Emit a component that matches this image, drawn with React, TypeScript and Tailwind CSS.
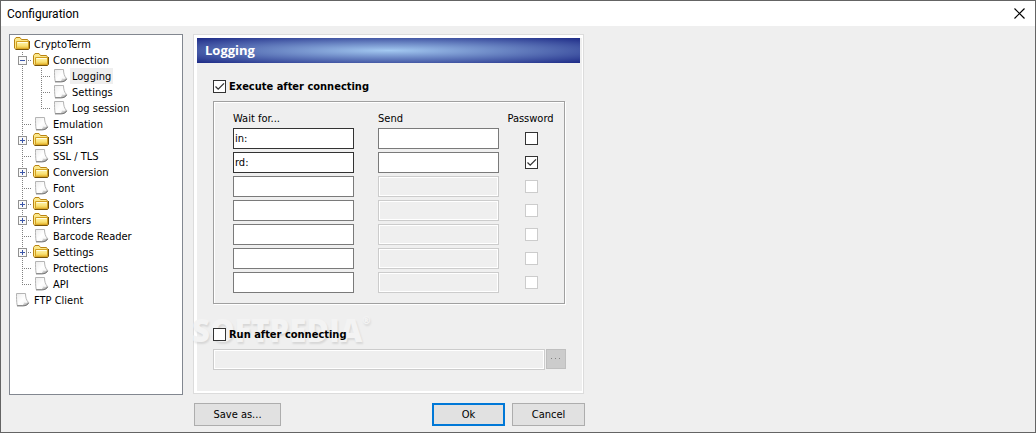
import { useState } from "react";
import type { ReactNode } from "react";

type TreeItem = { label: string; children?: TreeItem[]; folder?: boolean };

const connectionPages: TreeItem[] = [
  { label: "Logging" },
  { label: "Settings" },
  { label: "Log session" },
];

const tree: TreeItem[] = [
  {
    label: "CryptoTerm",
    folder: true,
    children: [
      { label: "Connection", folder: true, children: connectionPages },
      { label: "Emulation" },
      { label: "SSH", folder: true },
      { label: "SSL / TLS" },
      { label: "Conversion", folder: true },
      { label: "Font" },
      { label: "Colors", folder: true },
      { label: "Printers", folder: true },
      { label: "Barcode Reader" },
      { label: "Settings", folder: true },
      { label: "Protections" },
      { label: "API" },
    ],
  },
  { label: "FTP Client" },
];

function FolderIcon() {
  return (
    <svg width="16" height="16" viewBox="0 0 16 16" className="shrink-0" aria-hidden="true">
      <defs>
        <linearGradient id="folderFront" x1="0" y1="0" x2="0" y2="1">
          <stop offset="0" stopColor="#fff6b4" />
          <stop offset="0.6" stopColor="#f9e070" />
          <stop offset="1" stopColor="#e0ab24" />
        </linearGradient>
      </defs>
      <path d="M0.5 12V3.5L2 1.5H6L7.5 3.5H13.5L14.5 5V12.5L13.5 13.5H2Z" fill="#fbe88a" stroke="#b98413" />
      <path d="M2.5 12.5V5.5H14.5V13H3Z" fill="url(#folderFront)" stroke="#d39f20" />
      <path d="M1.5 13.5H14.5L15.5 12.5V5" fill="none" stroke="#75530a" />
      <path d="M3.5 6.5H13.5" stroke="#fffde6" />
    </svg>
  );
}

function PageIcon() {
  return (
    <svg width="16" height="16" viewBox="0 0 16 16" className="shrink-0" aria-hidden="true">
      <defs>
        <linearGradient id="pageFill" x1="0" y1="0" x2="1" y2="1">
          <stop offset="0" stopColor="#ececec" />
          <stop offset="0.5" stopColor="#ffffff" />
          <stop offset="1" stopColor="#f2f2f2" />
        </linearGradient>
        <linearGradient id="pageCurl" x1="0" y1="0" x2="1" y2="1">
          <stop offset="0" stopColor="#f4f4f4" />
          <stop offset="0.55" stopColor="#bdbdbd" />
          <stop offset="1" stopColor="#5e5e5e" />
        </linearGradient>
      </defs>
      <path d="M2.5 1.5H11.5C11.5 5 12.2 8 14.5 10.5L8.5 13.5H3.2C2.5 10 2.5 5 2.5 1.5Z" fill="url(#pageFill)" stroke="#b4b4b4" />
      <path d="M8 14C9.6 13 10 11.8 9.8 10.2C11.5 11 13 11 14.8 10.2C14.8 12.6 12 14.2 8 14Z" fill="url(#pageCurl)" />
      <path d="M3 13.9H9C11.800 13.800 14 12.600 14.700 10.800" fill="none" stroke="#6c6c6c" strokeWidth="0.9" />
    </svg>
  );
}

function Guide({ kind, box }: { kind: "through" | "tee" | "end" | "blank"; box?: "plus" | "minus" }) {
  return (
    <svg width="19" height="16" viewBox="0 0 19 16" className="shrink-0" shapeRendering="crispEdges" aria-hidden="true">
      {kind !== "blank" && (
        <path d={kind === "end" ? "M8.5 0V9" : "M8.5 0V16"} stroke="#808080" strokeDasharray="1 1" />
      )}
      {(kind === "tee" || kind === "end") && <path d="M8 8.500H18" stroke="#808080" strokeDasharray="1 1" />}
      {box && (
        <>
          <rect x="4.500" y="4.500" width="8" height="8" fill="#fafafa" stroke="#919191" />
          <path d="M6 8.500H11" stroke="#3a55a8" />
          {box === "plus" && <path d="M8.500 6V11" stroke="#3a55a8" />}
        </>
      )}
    </svg>
  );
}

function Node({
  item,
  guides,
  last,
  selected,
  onSelect,
}: {
  item: TreeItem;
  guides: boolean[] | null;
  last: boolean;
  selected: TreeItem;
  onSelect: (item: TreeItem) => void;
}) {
  const [open, setOpen] = useState(true);
  const guideKind = last ? "end" : "tee";
  const box = item.folder ? (item.children && open ? "minus" : "plus") : undefined;
  return (
    <li>
      <div className="flex h-4 items-center">
        {guides?.map((more, i) => <Guide key={i} kind={more ? "through" : "blank"} />)}
        {guides &&
          (box ? (
            <button type="button" aria-label={"Toggle " + item.label} onClick={() => setOpen(!open)}>
              <Guide kind={guideKind} box={box} />
            </button>
          ) : (
            <Guide kind={guideKind} />
          ))}
        {item.folder ? <FolderIcon /> : <PageIcon />}
        <button
          type="button"
          onClick={() => onSelect(item)}
          className={
            item === selected
              ? "ml-0.5 flex h-4 bg-[#efefef] px-0.5 leading-[18px] whitespace-nowrap"
              : "ml-0.5 flex h-4 px-0.5 leading-[18px] whitespace-nowrap"
          }
        >
          {item.label}
        </button>
      </div>
      {item.children && open && (
        <ul>
          {item.children.map((child, i) => (
            <Node
              key={child.label}
              item={child}
              guides={guides ? [...guides, !last] : []}
              last={i === item.children!.length - 1}
              selected={selected}
              onSelect={onSelect}
            />
          ))}
        </ul>
      )}
    </li>
  );
}

function CheckBox({
  name,
  initial = false,
  disabled = false,
  children,
}: {
  name?: string;
  initial?: boolean;
  disabled?: boolean;
  children?: ReactNode;
}) {
  return (
    <label className="flex items-center gap-[3px] leading-[15px] font-bold">
      <span className="grid size-[13px] shrink-0">
        <input
          type="checkbox"
          aria-label={name}
          defaultChecked={initial}
          disabled={disabled}
          className="peer col-start-1 row-start-1 size-[13px] appearance-none border border-[#333] bg-white disabled:border-[#ccc]"
        />
        <svg
          width="13"
          height="13"
          viewBox="0 0 13 13"
          className="pointer-events-none invisible col-start-1 row-start-1 peer-checked:visible"
          aria-hidden="true"
        >
          <path d="M2.500 6.500L5.200 9.200L11 3.400" fill="none" stroke="#333" strokeWidth="1.300" />
        </svg>
      </span>
      {children}
    </label>
  );
}

const rows = [
  { wait: "in:", password: false, enabled: true },
  { wait: "rd:", password: true, enabled: true },
  { wait: "", password: false, enabled: false },
  { wait: "", password: false, enabled: false },
  { wait: "", password: false, enabled: false },
  { wait: "", password: false, enabled: false },
  { wait: "", password: false, enabled: false },
];

const disabledField =
  "h-[21px] w-full min-w-0 border border-[#ccc] bg-[#efefef] px-px outline-1 -outline-offset-2 outline-white";

export default function App() {
  const [selected, setSelected] = useState<TreeItem>(connectionPages[0]);
  return (
    <div className="flex min-h-screen flex-col border border-[#646464] bg-[#efefef] font-['DejaVu_Sans_Condensed','DejaVu_Sans',sans-serif] text-[11px] leading-4 text-black">
      <header className="flex h-[25px] items-center justify-between bg-white pr-[10px] pl-[6px]">
        <h1 className="font-[Roboto,sans-serif] text-[12px]">Configuration</h1>
        <button type="button" aria-label="Close">
          <svg width="11" height="11" viewBox="0 0 11 11" aria-hidden="true">
            <path d="M0.500 0.500L10.500 10.500M10.500 0.500L0.500 10.500" stroke="#000" strokeWidth="1.200" />
          </svg>
        </button>
      </header>

      <div className="flex flex-1 items-start gap-[10px] px-2 pt-2 pb-[6px]">
        <nav className="mb-[31px] w-[174px] shrink-0 self-stretch border border-[#828790] bg-white py-px pl-1">
          <ul>
            {tree.map((item) => (
              <Node key={item.label} item={item} guides={null} last={false} selected={selected} onSelect={setSelected} />
            ))}
          </ul>
        </nav>

        <main className="flex w-full max-w-[392px] flex-col gap-[9px]">
          <section className="relative mr-px border border-[#dcdcdc] bg-white pt-[3px] pr-px pb-0.5 pl-[3px]">
            <div className="bg-[#efefef] pb-[21px]">
              <h2 className="mr-0.5 h-[25px] bg-[radial-gradient(ellipse_at_center,#a3c9f1_0%,#1d2a86_100%)] pl-2 font-['Open_Sans',sans-serif] text-[13px] leading-[25px] font-bold text-white">
                Logging
              </h2>
              <div
                aria-hidden="true"
                className="pointer-events-none absolute bottom-[47px] -left-0.5 flex items-start font-['Open_Sans',sans-serif] text-[31px] leading-[32px] font-extrabold text-[#f3f3f3] [text-shadow:1px_2px_2px_rgba(0,0,0,0.1)]"
              >
                SOFTPEDIA<span className="text-[10px] leading-[12px]">®</span>
              </div>
              <div className="relative pt-4 pr-4 pl-4">
                <CheckBox initial>Execute after connecting</CheckBox>
                <div className="mt-[7px] mr-px border border-[#a0a0a0] pt-[9px] pb-[7px] pl-[19px] shadow-[1px_1px_0_#fff,inset_1px_1px_0_#fff]">
                  <table className="w-full table-fixed border-collapse">
                    <colgroup>
                      <col className="w-[145px]" />
                      <col className="w-[121px]" />
                      <col />
                    </colgroup>
                    <thead>
                      <tr className="h-[17px] text-left align-top">
                        <th className="p-0 font-normal">Wait for...</th>
                        <th className="p-0 font-normal">Send</th>
                        <th className="p-0 pr-0.5 text-center font-normal">Password</th>
                      </tr>
                    </thead>
                    <tbody>
                      {rows.map((row, i) => (
                        <tr key={i} className="h-6 align-top">
                          <td className="p-0 pr-6">
                            <input
                              type="text"
                              aria-label={"Wait for, row " + (i + 1)}
                              defaultValue={row.wait}
                              className={
                                row.wait
                                  ? "block h-[21px] w-full border border-[#333] bg-white px-px"
                                  : "block h-[21px] w-full border border-[#7a7a7a] bg-white px-px"
                              }
                            />
                          </td>
                          <td className="p-0">
                            <input
                              type="text"
                              aria-label={"Send, row " + (i + 1)}
                              disabled={!row.enabled}
                              className={
                                row.enabled
                                  ? "block h-[21px] w-full border border-[#7a7a7a] bg-white px-px"
                                  : "block " + disabledField
                              }
                            />
                          </td>
                          <td className="p-0 pt-1 pr-px">
                            <div className="flex justify-center">
                              <CheckBox name={"Password, row " + (i + 1)} initial={row.password} disabled={!row.enabled} />
                            </div>
                          </td>
                        </tr>
                      ))}
                    </tbody>
                  </table>
                </div>
                <div className="mt-[23px]">
                  <CheckBox>Run after connecting</CheckBox>
                </div>
                <div className="mt-[7px] flex gap-px">
                  <input type="text" disabled aria-label="Program to run" className={disabledField} />
                  <button
                    type="button"
                    disabled
                    aria-label="Browse"
                    className="flex h-5 w-5 shrink-0 items-center justify-center border border-[#bfbfbf] bg-[#ccc]"
                  >
                    <svg width="10" height="2" viewBox="0 0 10 2" shapeRendering="crispEdges" aria-hidden="true">
                      <path d="M0 0.500H1M4 0.500H5M8 0.500H9" stroke="#838383" />
                    </svg>
                  </button>
                </div>
              </div>
            </div>
          </section>

          <div className="flex gap-[7px] pl-px">
            <button type="button" className="mr-auto h-[23px] w-[87px] border border-[#adadad] bg-[#e1e1e1]">
              Save as...
            </button>
            <button type="submit" className="h-[23px] w-[73px] border-2 border-[#0078d7] bg-[#e1e1e1] leading-4">
              Ok
            </button>
            <button type="button" className="h-[23px] w-[73px] border border-[#adadad] bg-[#e1e1e1]">
              Cancel
            </button>
          </div>
        </main>
      </div>
    </div>
  );
}
